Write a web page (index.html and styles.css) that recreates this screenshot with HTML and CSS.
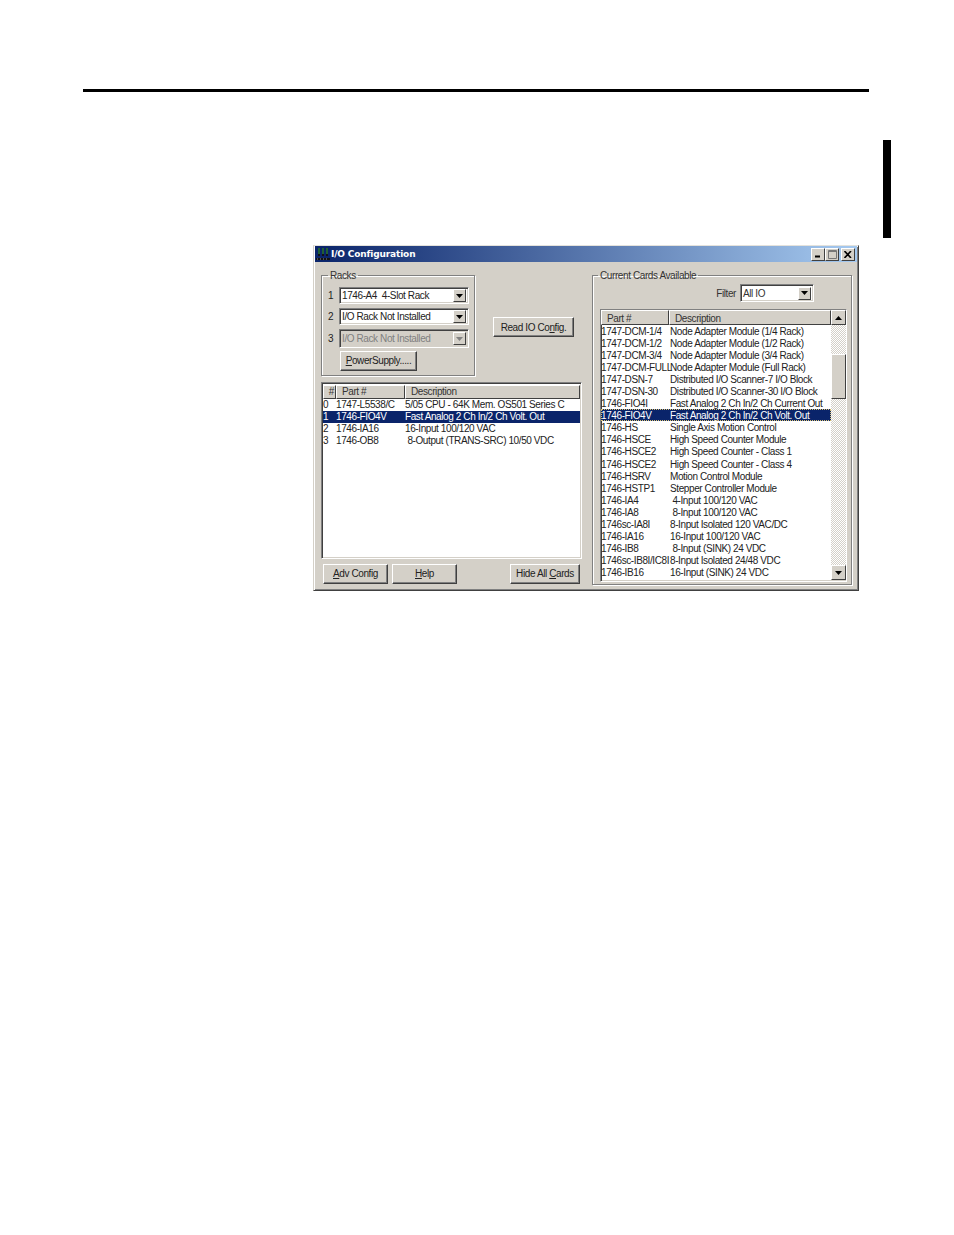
FILE: index.html
```html
<!DOCTYPE html>
<html lang="en">
<head>
<meta charset="utf-8">
<title>I/O Configuration</title>
<link rel="stylesheet" href="styles.css">
</head>
<body>
<div class="rule"></div>
<div class="tab"></div>
<section class="window">
  <header class="titlebar">
    <svg class="appicon" width="14" height="14" viewBox="0 0 14 14"><rect width="14" height="14" fill="#0a246a"/><path d="M2 1h2v8H2zM6 1h2v8H6zM10 1h2v8h-2z" fill="#111"/><path d="M2 2h2M2 4h2M2 6h2M6 2h2M6 4h2M6 6h2M10 2h2M10 4h2M10 6h2" stroke="#2fae5a" stroke-width="1"/><path d="M0 11h14v2H0z" fill="#111"/><path d="M1 12h1M4 12h1M7 12h1M10 12h1" stroke="#889" stroke-width="1"/></svg>
    <span class="title">I/O Configuration</span>
    <div class="winbtns">
      <button class="winbtn"><svg width="8" height="7" viewBox="0 0 8 7"><path d="M1 5.500h5" stroke="#000" stroke-width="2"/></svg></button>
      <button class="winbtn"><svg width="9" height="9" viewBox="0 0 9 9"><path d="M.5 .5h8v8h-8zM.5 1.500h8" fill="none" stroke="#777"/></svg></button>
      <button class="winbtn close"><svg width="8" height="7" viewBox="0 0 8 7"><path d="M.5 0l6.500 7M7 0L.5 7" stroke="#000" stroke-width="1.600"/></svg></button>
    </div>
  </header>
  <div class="content">
    <div class="leftcol">
      <div class="toprow">
        <fieldset class="group racks">
          <legend>Racks</legend>
          <div class="rackrow"><span class="rackno">1</span><div class="combo"><span class="value">1746-A4&nbsp; 4-Slot Rack</span><span class="arrow"><svg width="7" height="4" viewBox="0 0 7 4"><path d="M0 0h7L3.500 4z"/></svg></span></div></div>
          <div class="rackrow"><span class="rackno">2</span><div class="combo"><span class="value">I/O Rack Not Installed</span><span class="arrow"><svg width="7" height="4" viewBox="0 0 7 4"><path d="M0 0h7L3.500 4z"/></svg></span></div></div>
          <div class="rackrow third"><span class="rackno">3</span><div class="combo off"><span class="value">I/O Rack Not Installed</span><span class="arrow"><svg width="7" height="4" viewBox="0 0 7 4"><path d="M0 0h7L3.500 4z"/></svg></span></div></div>
          <button class="btn power"><u>P</u>owerSupply.....</button>
        </fieldset>
        <button class="btn readio">Read IO Co<u>n</u>fig.</button>
      </div>
      <div class="list leftlist">
        <div class="lhead"><span class="hcell hnum">#</span><span class="hcell hpart">Part #</span><span class="hcell hdesc">Description</span></div>
        <div class="lrow"><span>0</span><span>1747-L5538/C</span><span>5/05 CPU - 64K Mem. OS501 Series C</span></div>
        <div class="lrow sel"><span>1</span><span>1746-FIO4V</span><span>Fast Analog 2 Ch In/2 Ch Volt. Out</span></div>
        <div class="lrow"><span>2</span><span>1746-IA16</span><span>16-Input 100/120 VAC</span></div>
        <div class="lrow"><span>3</span><span>1746-OB8</span><span> 8-Output (TRANS-SRC) 10/50 VDC</span></div>
      </div>
      <div class="bottombtns">
        <button class="btn adv"><u>A</u>dv Config</button>
        <button class="btn help"><u>H</u>elp</button>
        <button class="btn hide">Hide All <u>C</u>ards</button>
      </div>
    </div>
    <fieldset class="group cards">
      <legend>Current Cards Available</legend>
      <div class="filter"><span>Filter</span><div class="combo filtercombo"><span class="value">All IO</span><span class="arrow"><svg width="7" height="4" viewBox="0 0 7 4"><path d="M0 0h7L3.500 4z"/></svg></span></div></div>
      <div class="list cardlist">
        <div class="cardmain">
          <div class="rhead"><span class="hcell rpart">Part #</span><span class="hcell rdesc">Description</span></div>
          <div class="rrow"><span>1747-DCM-1/4</span><span>Node Adapter Module (1/4 Rack)</span></div>
          <div class="rrow"><span>1747-DCM-1/2</span><span>Node Adapter Module (1/2 Rack)</span></div>
          <div class="rrow"><span>1747-DCM-3/4</span><span>Node Adapter Module (3/4 Rack)</span></div>
          <div class="rrow"><span>1747-DCM-FULL</span><span>Node Adapter Module (Full Rack)</span></div>
          <div class="rrow"><span>1747-DSN-7</span><span>Distributed I/O Scanner-7 I/O Block</span></div>
          <div class="rrow"><span>1747-DSN-30</span><span>Distributed I/O Scanner-30 I/O Block</span></div>
          <div class="rrow"><span>1746-FIO4I</span><span>Fast Analog 2 Ch In/2 Ch Current Out</span></div>
          <div class="rrow sel"><span>1746-FIO4V</span><span>Fast Analog 2 Ch In/2 Ch Volt. Out</span></div>
          <div class="rrow"><span>1746-HS</span><span>Single Axis Motion Control</span></div>
          <div class="rrow"><span>1746-HSCE</span><span>High Speed Counter Module</span></div>
          <div class="rrow"><span>1746-HSCE2</span><span>High Speed Counter - Class 1</span></div>
          <div class="rrow"><span>1746-HSCE2</span><span>High Speed Counter - Class 4</span></div>
          <div class="rrow"><span>1746-HSRV</span><span>Motion Control Module</span></div>
          <div class="rrow"><span>1746-HSTP1</span><span>Stepper Controller Module</span></div>
          <div class="rrow"><span>1746-IA4</span><span> 4-Input 100/120 VAC</span></div>
          <div class="rrow"><span>1746-IA8</span><span> 8-Input 100/120 VAC</span></div>
          <div class="rrow"><span>1746sc-IA8I</span><span>8-Input Isolated 120 VAC/DC</span></div>
          <div class="rrow"><span>1746-IA16</span><span>16-Input 100/120 VAC</span></div>
          <div class="rrow"><span>1746-IB8</span><span> 8-Input (SINK) 24 VDC</span></div>
          <div class="rrow"><span>1746sc-IB8I/IC8I</span><span>8-Input Isolated 24/48 VDC</span></div>
          <div class="rrow"><span>1746-IB16</span><span>16-Input (SINK) 24 VDC</span></div>
        </div>
        <div class="scrollbar">
          <span class="sbtn"><svg width="7" height="4" viewBox="0 0 7 4"><path d="M3.500 0L7 4H0z"/></svg></span>
          <div class="track"><span class="thumb"></span></div>
          <span class="sbtn"><svg width="7" height="4" viewBox="0 0 7 4"><path d="M0 0h7L3.500 4z"/></svg></span>
        </div>
      </div>
    </fieldset>
  </div>
</section>
</body>
</html>
```
FILE: styles.css
```css
* { box-sizing: border-box; }
html, body { margin: 0; padding: 0; background: #fff; }
body { height: 1235px; overflow: hidden; font-family: "Liberation Sans", Arial, sans-serif; font-size: 10px; letter-spacing: -.4px; color: #222; }

.rule { height: 3px; width: 786px; margin: 89px 0 0 83px; background: #000; }
.tab { width: 8px; height: 98px; margin: 48px 0 0 883px; background: #000; }

.window { width: 546px; height: 346px; margin: 7px 0 0 313px; background: #d4d0c8; border: 1px solid; border-color: #e4e2dc #404040 #404040 #d4d0c8; box-shadow: inset 1px 1px 0 #fff, inset -1px -1px 0 #808080; padding: 0 1px 1px; display: flex; flex-direction: column; }

.titlebar { height: 16px; flex: none; display: flex; align-items: center; padding: 0 1px; background: linear-gradient(90deg, #0a246a, #a6caf0); }
.appicon { flex: none; margin-right: 1px; }
.title { font-family: "DejaVu Sans", sans-serif; font-weight: 700; font-size: 9px; color: #fff; letter-spacing: -.15px; }
.winbtns { margin-left: auto; display: flex; padding-right: 1px; }
.winbtn { width: 14px; height: 13px; padding: 0; background: #d4d0c8; border: 1px solid; border-color: #fff #404040 #404040 #fff; display: flex; align-items: center; justify-content: center; }
.winbtn.close { margin-left: 2px; }

.content { flex: 1; display: flex; padding-left: 6px; }
.leftcol { width: 261px; flex: none; padding-top: 7px; }
.toprow { display: flex; align-items: flex-start; }

.group { margin: 0; min-width: 0; border: 1px solid #808080; box-shadow: 1px 1px 0 #fff, inset 1px 1px 0 #fff; }
.group legend { padding: 0 2px; height: 12px; line-height: 14px; color: #333; }
.racks legend { margin-left: 0; }
.cards legend { margin-left: -2px; }

.racks { width: 154px; height: 107px; padding: 6px 5px 0 6px; flex: none; }
.rackrow { display: flex; align-items: center; height: 17px; margin-bottom: 4px; }
.rackrow.third { height: 19px; margin-bottom: 3px; }
.rackno { width: 11px; flex: none; text-align: left; }
.combo { flex: 1; height: 100%; display: flex; align-items: center; justify-content: space-between; background: #fff; border: 1px solid; border-color: #808080 #fff #fff #808080; box-shadow: inset 1px 1px 0 #404040, inset -1px -1px 0 #d4d0c8; padding: 0 2px 0 2px; }
.combo.off { background: #d4d0c8; color: #808080; }
.combo.off .arrow svg { fill: #808080; }
.value { white-space: nowrap; }
.arrow { width: 13px; height: 13px; flex: none; background: #d4d0c8; border: 1px solid; border-color: #fff #404040 #404040 #fff; display: flex; align-items: center; justify-content: center; }

.btn { padding: 0 0 2px; font: inherit; letter-spacing: inherit; color: inherit; background: #d4d0c8; border: 1px solid; border-color: #fff #404040 #404040 #fff; box-shadow: inset -1px -1px 0 #808080; text-align: center; white-space: nowrap; }
.power { display: block; width: 77px; height: 20px; margin-left: 12px; }
.readio { width: 81px; height: 20px; margin: 48px 0 0 18px; padding-bottom: 0; }

.list { background: #fff; border: 1px solid; border-color: #808080 #fff #fff #808080; box-shadow: inset 1px 1px 0 #404040, inset -1px -1px 0 #d4d0c8; }
.leftlist { width: 261px; height: 177px; margin-top: 6px; padding: 2px 1px; }
.lhead { display: flex; height: 14px; }
.hcell { height: 100%; line-height: 12px; background: #d4d0c8; border: 1px solid; border-color: #fff #404040 #404040 #fff; white-space: nowrap; color: #333; }
.hnum { width: 13px; text-align: right; padding-right: 1px; }
.hpart { width: 69px; padding-left: 5px; }
.hdesc { flex: 1; padding-left: 5px; }
.lrow { display: grid; grid-template-columns: 13px 69px 1fr; height: 12px; line-height: 11px; white-space: pre; }
.sel { background: #0a246a; color: #fff; }

.bottombtns { display: flex; margin-top: 5px; padding-left: 2px; }
.adv, .help { width: 65px; height: 20px; margin-right: 4px; }
.hide { width: 70px; height: 20px; margin-left: 49px; }

.cards { width: 260px; height: 316px; margin-left: 10px; margin-top: 7px; padding: 3px 5px 0 7px; flex: none; }
.filter { display: flex; justify-content: flex-end; align-items: center; gap: 4px; height: 18px; padding-right: 32px; color: #333; }
.filtercombo { flex: none; width: 74px; height: 18px; padding-left: 2px; }

.cardlist { width: 247px; height: 273px; margin-top: 7px; padding: 0 1px 1px 0; display: flex; }
.cardmain { width: 230px; flex: none; }
.rhead { display: flex; height: 15px; }
.rpart { width: 68px; padding-left: 5px; line-height: 15px; }
.rdesc { flex: 1; padding-left: 5px; line-height: 15px; }
.rrow { display: grid; grid-template-columns: 69px 1fr; height: 12.05px; line-height: 14px; white-space: pre; }
.rrow.sel { outline: 1px dotted #d8c070; outline-offset: -1px; }

.scrollbar { width: 15px; flex: none; display: flex; flex-direction: column; }
.sbtn { height: 15px; flex: none; background: #d4d0c8; border: 1px solid; border-color: #fff #404040 #404040 #fff; display: flex; align-items: center; justify-content: center; }
.track { flex: 1; padding-top: 29px; background-color: #fff; background-image: conic-gradient(#d4d0c8 25%, #fff 0 50%, #d4d0c8 0 75%, #fff 0); background-size: 2px 2px; }
.thumb { display: block; height: 45px; background: #d4d0c8; border: 1px solid; border-color: #fff #404040 #404040 #fff; }
```
